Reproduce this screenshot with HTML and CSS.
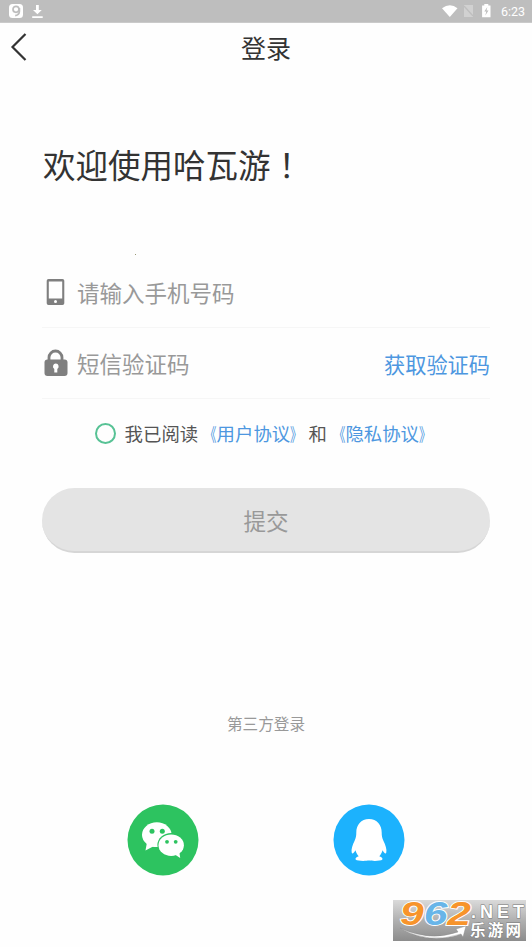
FILE: index.html
```html
<!DOCTYPE html>
<html lang="zh-CN">
<head>
<meta charset="utf-8">
<title>登录</title>
<link rel="stylesheet" href="styles.css">
</head>
<body>
<div class="status">
  <svg class="status-left" width="40" height="23" viewBox="0 0 40 23">
    <rect x="0" y="4" width="14" height="14" rx="3.5" fill="#fff"/>
    <circle cx="7" cy="9.3" r="3" fill="none" stroke="#bebebe" stroke-width="1.7"/>
    <path d="M10.4 8v3.2q0 3.6-4.2 4.5" fill="none" stroke="#bebebe" stroke-width="1.7"/>
    <path d="M27 5h2.8v5h3L28.400 14.200l-4.400-4.200h3zM23.200 16.200h10.500v1.700h-10.500z" fill="#fff"/>
  </svg>
  <svg class="status-right" width="52" height="23" viewBox="0 0 52 23">
    <path d="M0 8.200Q8 2.400 15.500 8.200L7.800 17z" fill="#fff"/>
    <path d="M22 5h9v12h-9z" fill="#d1d1d1"/>
    <path d="M22 6l9 10" stroke="#bebebe" stroke-width="1.300"/>
    <path d="M42.300 4h4v1.400h2.200v11.800h-8.400V5.400h2.200z" fill="#fff"/>
    <path d="M45.300 7l-3 4.500h2l-1 4 3.200-5h-2z" fill="#bebebe"/>
  </svg>
  <span class="time">6:23</span>
</div>
<header class="bar">
  <svg class="back" width="18" height="30" viewBox="0 0 18 30"><path d="M15.500 2L2.500 15l13 13" fill="none" stroke="#333" stroke-width="2.200"/></svg>
  <h1>登录</h1>
</header>
<main>
  <h2>欢迎使用哈瓦游<span class="bang" lang="zh-TW">！</span></h2>
  <i class="speck"></i>
  <div class="field phone">
    <svg width="26" height="28" viewBox="0 0 26 28">
      <path fill="#7f7f7f" fill-rule="evenodd" d="M6.500 1h14q1.800 0 1.800 1.800v22.400q0 1.800-1.800 1.800h-14q-1.800 0-1.800-1.800V2.800Q4.700 1 6.500 1zM6.800 3.500v17h13.400v-17z"/>
      <circle cx="13.500" cy="23.600" r="1.500" fill="#fff"/>
    </svg>
    <span>请输入手机号码</span>
  </div>
  <div class="field code">
    <svg width="26" height="28" viewBox="0 0 26 28">
      <path d="M7 12V8.500a6.500 6.500 0 0 1 13 0V12" fill="none" stroke="#7f7f7f" stroke-width="2.800"/>
      <rect x="2.500" y="10.500" width="23" height="16.500" rx="3" fill="#7f7f7f"/>
      <path d="M13.800 14.500a3 3 0 0 1 1.500 5.500v3.500h-3V20a3 3 0 0 1 1.500-5.500z" fill="#fff"/>
    </svg>
    <span>短信验证码</span>
    <a>获取验证码</a>
  </div>
  <div class="agree"><i class="radio"></i><p>我已阅读<a><b class="open">《</b>用户协议<b class="close">》</b></a>和<a><b class="open">《</b>隐私协议<b class="close">》</b></a></p></div>
  <button class="submit">提交</button>
</main>
<p class="third">第三方登录</p>
<div class="social">
  <svg width="72" height="72" viewBox="0 0 72 72">
    <circle cx="36" cy="36" r="35.500" fill="#2dc360"/>
    <ellipse cx="29.800" cy="30.700" rx="14.800" ry="12.400" fill="#fff"/>
    <path d="M20 38l-1.500 8.500 8.500-4.500z" fill="#fff"/>
    <ellipse cx="44.200" cy="41" rx="13.800" ry="12" fill="#2dc360"/>
    <ellipse cx="44.200" cy="41.200" rx="12.700" ry="10.800" fill="#fff"/>
    <path d="M47 50l6.200 4-1-7z" fill="#fff"/>
    <g fill="#2dc360"><circle cx="25" cy="27.300" r="2.500"/><circle cx="35.300" cy="27.300" r="2.500"/><circle cx="40" cy="37.800" r="1.900"/><circle cx="48.700" cy="37.800" r="1.900"/></g>
  </svg>
  <svg width="72" height="72" viewBox="0 0 72 72">
    <circle cx="36" cy="36" r="35.500" fill="#1cb2fd"/>
    <path fill="#fff" d="M36 15c8 0 12.700 6 12.700 13.500 0 3 .3 5.500 1.800 8.500 2 4 3.500 8.500 2.800 11.500-.5 2.200-2.300.3-3.800-2.300-.6 2.300-1.700 4.300-3.200 6 2.700 1 4 2.300 2.800 3.600-1.200 1.400-10 1.200-13.100.8-3.100.4-11.900.6-13.100-.8-1.200-1.300.1-2.600 2.800-3.600-1.500-1.700-2.600-3.700-3.200-6-1.500 2.600-3.300 4.500-3.800 2.300-.7-3 .8-7.500 2.800-11.500 1.500-3 1.800-5.500 1.800-8.500C23.300 21 28 15 36 15z"/>
  </svg>
</div>
<svg class="mark" width="139" height="57" viewBox="0 0 139 57">
  <defs><linearGradient id="g" x1="0" y1="0" x2="0" y2="1"><stop offset="0" stop-color="#dadada"/><stop offset=".5" stop-color="#b0b0b0"/><stop offset="1" stop-color="#8c8c8c"/></linearGradient></defs>
  <rect x="0" y="10" width="133" height="41" fill="url(#g)"/>
  <text class="digits" x="7" y="35" textLength="71" lengthAdjust="spacingAndGlyphs"><tspan fill="#f7942b">9</tspan><tspan fill="#68b5e8">6</tspan><tspan fill="#f7942b">2</tspan></text>
  <path d="M7 38q30 14 58 4l-2-3 10-3-3 11-2-3q-32 11-61-6z" fill="#fff" stroke="#888" stroke-width=".4"/>
  <text class="net" x="78" y="28" textLength="53" lengthAdjust="spacing">.NET</text>
  <text class="name" x="77" y="46" textLength="51">乐游网</text>
</svg>
</body>
</html>
```

FILE: styles.css
```css
* { box-sizing: border-box; }
body {
  margin: 0;
  position: relative;
  height: 947px;
  overflow: hidden;
  display: flex;
  flex-direction: column;
  background: #fefefe;
  color: #333;
  font-family: "Noto Sans CJK SC", sans-serif;
}
h1, h2, p { margin: 0; font-weight: 400; }
.status { height: 23px; flex: none; background: #bebebe; border-bottom: 1px solid #cacaca; display: flex; padding: 0 7px 0 9px; }
.status-right { margin-left: auto; }
.time { width: 28px; margin-left: 3px; font: 12.500px/23px Roboto, sans-serif; color: #fff; text-align: right; }
.bar { height: 49px; flex: none; position: relative; display: flex; justify-content: center; align-items: center; }
.back { position: absolute; left: 10px; top: 9px; }
h1 { font-size: 25px; line-height: 49px; padding-bottom: 1px; }
main { padding: 0 42px; display: flex; flex-direction: column; }
h2 { margin: 67px 0 0 1px; font-size: 32.500px; line-height: 50px; white-space: nowrap; }
.bang { font-family: "Noto Sans CJK TC", sans-serif; }
.speck { width: 1px; height: 1px; background: #997; margin: 65px 0 0 93px; }
.field { display: flex; align-items: center; font-size: 22.500px; color: #999; border-bottom: 1px solid #f6f6f6; }
.field span { margin-left: 9px; line-height: 40px; }
.field a { margin-left: auto; font-size: 21.200px; color: #4d97e0; }
.phone { height: 73px; padding-top: 2px; }
.code { height: 71px; }
.agree { height: 68px; display: flex; align-items: center; justify-content: center; }
.radio { width: 21px; height: 21px; border: 2px solid #57c295; border-radius: 50%; margin-right: 9px; }
.agree p { font-size: 18.400px; line-height: 30px; color: #555; white-space: nowrap; }
.agree a { color: #4d97e0; }
.agree b { display: inline-block; font-weight: 400; }
.open { transform: scaleX(.65); transform-origin: right; }
.close { transform: scaleX(.65); transform-origin: left; }
.submit { margin: 21px 0 0; height: 65px; border: 0; border-bottom: 2px solid #d6d6d6; border-radius: 33px; background: #e4e4e4; color: #999; font: 22.500px/60px "Noto Sans CJK SC", sans-serif; padding: 0; }
.third { margin-top: 155px; text-align: center; font-size: 15.600px; line-height: 30px; color: #999; }
.social { display: flex; justify-content: space-between; padding: 0 127px; margin-top: 66px; }
.mark { position: absolute; left: 393px; top: 890px; }
.digits { font: italic 700 33px "Liberation Sans", sans-serif; stroke: #fff; stroke-width: 1.800px; paint-order: stroke; }
.net { font: 700 18px "Liberation Sans", sans-serif; fill: #fff; stroke: #777; stroke-width: 1px; paint-order: stroke; }
.name { font: 700 15.500px "Noto Sans CJK SC", sans-serif; fill: #fff; stroke: #777; stroke-width: .8px; paint-order: stroke; }
```
